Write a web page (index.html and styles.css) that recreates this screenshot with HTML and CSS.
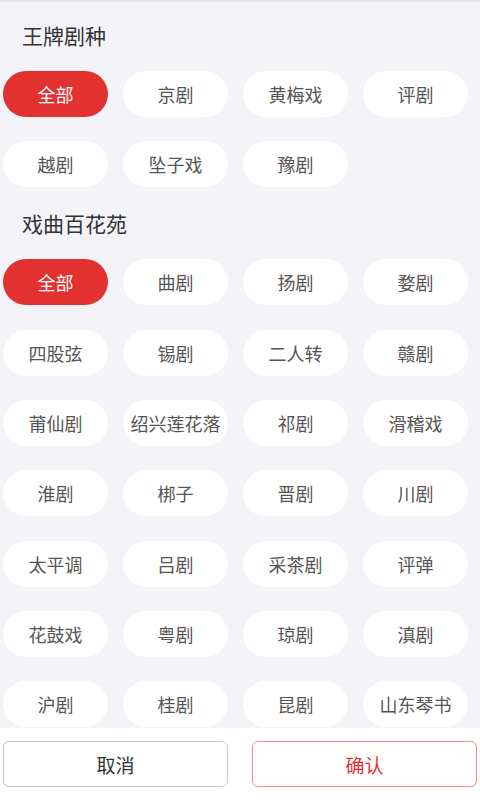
FILE: index.html
```html
<!DOCTYPE html>
<html lang="zh">
<head>
<meta charset="utf-8">
<link rel="stylesheet" href="styles.css">
</head>
<body>
<div class="page">
  <div class="content">
    <section class="section">
      <h2 class="title">王牌剧种</h2>
      <div class="grid">
        <span class="pill active">全部</span>
        <span class="pill">京剧</span>
        <span class="pill">黄梅戏</span>
        <span class="pill">评剧</span>
        <span class="pill">越剧</span>
        <span class="pill">坠子戏</span>
        <span class="pill">豫剧</span>
      </div>
    </section>
    <section class="section second">
      <h2 class="title">戏曲百花苑</h2>
      <div class="grid">
        <span class="pill active">全部</span>
        <span class="pill">曲剧</span>
        <span class="pill">扬剧</span>
        <span class="pill">婺剧</span>
        <span class="pill">四股弦</span>
        <span class="pill">锡剧</span>
        <span class="pill">二人转</span>
        <span class="pill">赣剧</span>
        <span class="pill">莆仙剧</span>
        <span class="pill">绍兴莲花落</span>
        <span class="pill">祁剧</span>
        <span class="pill">滑稽戏</span>
        <span class="pill">淮剧</span>
        <span class="pill">梆子</span>
        <span class="pill">晋剧</span>
        <span class="pill">川剧</span>
        <span class="pill">太平调</span>
        <span class="pill">吕剧</span>
        <span class="pill">采茶剧</span>
        <span class="pill">评弹</span>
        <span class="pill">花鼓戏</span>
        <span class="pill">粤剧</span>
        <span class="pill">琼剧</span>
        <span class="pill">滇剧</span>
        <span class="pill">沪剧</span>
        <span class="pill">桂剧</span>
        <span class="pill">昆剧</span>
        <span class="pill">山东琴书</span>
      </div>
    </section>
  </div>
  <div class="footer">
    <button class="btn cancel">取消</button>
    <button class="btn confirm">确认</button>
  </div>
</div>
</body>
</html>
```
FILE: styles.css
```css
* { box-sizing: border-box; }
html, body {
  margin: 0;
  padding: 0;
  width: 480px;
  height: 800px;
  overflow: hidden;
  font-family: "Noto Sans CJK SC", "Noto Sans", sans-serif;
  background: #f4f4f8;
}
.page {
  display: flex;
  flex-direction: column;
  height: 800px;
  border-top: 2px solid #e6e6ea;
}
.content {
  height: 726px;
  overflow: hidden;
  padding-left: 3px;
}
.title {
  margin: 0;
  height: 69px;
  line-height: 66px;
  padding-left: 19px;
  font-size: 21px;
  font-weight: normal;
  color: #333;
}
.section.second .title {
  height: 72px;
  line-height: 72px;
}
.grid {
  display: grid;
  grid-template-columns: repeat(4, 105px);
  column-gap: 15px;
  row-gap: 24.33px;
}
.pill {
  height: 46px;
  border-radius: 23px;
  background: #fff;
  color: #555;
  font-size: 18px;
  display: flex;
  align-items: center;
  justify-content: center;
  white-space: nowrap;
}
.pill.active {
  background: #e3312f;
  color: #fff;
}
.footer {
  flex: 1;
  background: #fff;
  display: flex;
  padding: 13px 3px 0 3px;
  gap: 24px;
  align-items: flex-start;
}
.btn {
  width: 225px;
  height: 46px;
  border-radius: 6px;
  background: #fff;
  font-family: inherit;
  font-size: 19px;
  padding: 0;
}
.cancel {
  border: 1px solid #c8c8c8;
  color: #333;
}
.confirm {
  border: 1px solid #f08c8c;
  color: #e3312f;
}
```
